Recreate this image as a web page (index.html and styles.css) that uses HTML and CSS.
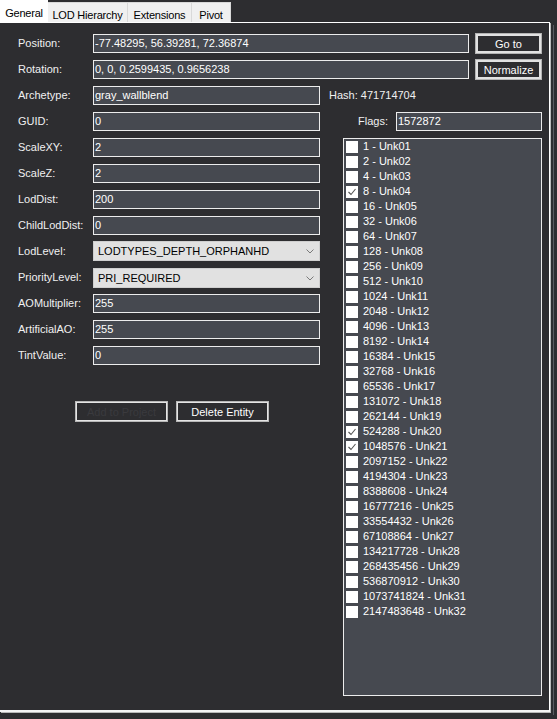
FILE: index.html
```html
<!DOCTYPE html>
<html lang="en">

<head>
    <meta charset="UTF-8">
    <title>Entity</title>
    <link rel="stylesheet" href="styles.css">
</head>

<body>
    <div class="tabs">
        <div class="tab active">General</div>
        <div class="tab tab-lod">LOD Hierarchy</div>
        <div class="tab tab-ext">Extensions</div>
        <div class="tab tab-pivot">Pivot</div>
    </div>

    <div class="page">
        <div class="row">
            <span class="label">Position:</span>
            <div class="field wide">-77.48295, 56.39281, 72.36874</div>
            <button class="btn btn-top">Go to</button>
        </div>
        <div class="row">
            <span class="label">Rotation:</span>
            <div class="field wide">0, 0, 0.2599435, 0.9656238</div>
            <button class="btn btn-top">Normalize</button>
        </div>

        <div class="split">
            <div class="left">
                <div class="row">
                    <span class="label">Archetype:</span>
                    <div class="field">gray_wallblend</div>
                </div>
                <div class="row">
                    <span class="label">GUID:</span>
                    <div class="field">0</div>
                </div>
                <div class="row">
                    <span class="label">ScaleXY:</span>
                    <div class="field">2</div>
                </div>
                <div class="row">
                    <span class="label">ScaleZ:</span>
                    <div class="field">2</div>
                </div>
                <div class="row">
                    <span class="label">LodDist:</span>
                    <div class="field">200</div>
                </div>
                <div class="row">
                    <span class="label">ChildLodDist:</span>
                    <div class="field">0</div>
                </div>
                <div class="row">
                    <span class="label">LodLevel:</span>
                    <div class="combo combo-up">
                        <span>LODTYPES_DEPTH_ORPHANHD</span>
                        <svg width="8" height="5" viewBox="0 0 8 5"><polyline points="0.5,0.5 4,4 7.5,0.5" fill="none" stroke="#7a7a7a" stroke-width="1"/></svg>
                    </div>
                </div>
                <div class="row">
                    <span class="label">PriorityLevel:</span>
                    <div class="combo">
                        <span>PRI_REQUIRED</span>
                        <svg width="8" height="5" viewBox="0 0 8 5"><polyline points="0.5,0.5 4,4 7.5,0.5" fill="none" stroke="#7a7a7a" stroke-width="1"/></svg>
                    </div>
                </div>
                <div class="row">
                    <span class="label">AOMultiplier:</span>
                    <div class="field">255</div>
                </div>
                <div class="row">
                    <span class="label">ArtificialAO:</span>
                    <div class="field">255</div>
                </div>
                <div class="row">
                    <span class="label">TintValue:</span>
                    <div class="field">0</div>
                </div>

                <div class="actions">
                    <button class="btn btn-low disabled">Add to Project</button>
                    <button class="btn btn-low">Delete Entity</button>
                </div>
            </div>

            <div class="right">
                <div class="row">
                    <span class="hash">Hash: 471714704</span>
                </div>
                <div class="row">
                    <span class="flags-label">Flags:</span>
                    <div class="field flags">1572872</div>
                </div>
                <div class="checklist">
                    <div class="item"><span class="box"></span>1 - Unk01</div>
                    <div class="item"><span class="box"></span>2 - Unk02</div>
                    <div class="item"><span class="box"></span>4 - Unk03</div>
                    <div class="item"><span class="box"><svg width="12" height="12" viewBox="0 0 12 12"><polyline points="2.5,6 5,8.5 9.5,3" fill="none" stroke="#555" stroke-width="1.1"/></svg></span>8 - Unk04</div>
                    <div class="item"><span class="box"></span>16 - Unk05</div>
                    <div class="item"><span class="box"></span>32 - Unk06</div>
                    <div class="item"><span class="box"></span>64 - Unk07</div>
                    <div class="item"><span class="box"></span>128 - Unk08</div>
                    <div class="item"><span class="box"></span>256 - Unk09</div>
                    <div class="item"><span class="box"></span>512 - Unk10</div>
                    <div class="item"><span class="box"></span>1024 - Unk11</div>
                    <div class="item"><span class="box"></span>2048 - Unk12</div>
                    <div class="item"><span class="box"></span>4096 - Unk13</div>
                    <div class="item"><span class="box"></span>8192 - Unk14</div>
                    <div class="item"><span class="box"></span>16384 - Unk15</div>
                    <div class="item"><span class="box"></span>32768 - Unk16</div>
                    <div class="item"><span class="box"></span>65536 - Unk17</div>
                    <div class="item"><span class="box"></span>131072 - Unk18</div>
                    <div class="item"><span class="box"></span>262144 - Unk19</div>
                    <div class="item"><span class="box"><svg width="12" height="12" viewBox="0 0 12 12"><polyline points="2.5,6 5,8.5 9.5,3" fill="none" stroke="#555" stroke-width="1.1"/></svg></span>524288 - Unk20</div>
                    <div class="item"><span class="box"><svg width="12" height="12" viewBox="0 0 12 12"><polyline points="2.5,6 5,8.5 9.5,3" fill="none" stroke="#555" stroke-width="1.1"/></svg></span>1048576 - Unk21</div>
                    <div class="item"><span class="box"></span>2097152 - Unk22</div>
                    <div class="item"><span class="box"></span>4194304 - Unk23</div>
                    <div class="item"><span class="box"></span>8388608 - Unk24</div>
                    <div class="item"><span class="box"></span>16777216 - Unk25</div>
                    <div class="item"><span class="box"></span>33554432 - Unk26</div>
                    <div class="item"><span class="box"></span>67108864 - Unk27</div>
                    <div class="item"><span class="box"></span>134217728 - Unk28</div>
                    <div class="item"><span class="box"></span>268435456 - Unk29</div>
                    <div class="item"><span class="box"></span>536870912 - Unk30</div>
                    <div class="item"><span class="box"></span>1073741824 - Unk31</div>
                    <div class="item"><span class="box"></span>2147483648 - Unk32</div>
                </div>
            </div>
        </div>
    </div>
</body>

</html>
```

FILE: styles.css
```css
* {
    margin: 0;
    padding: 0;
    box-sizing: border-box;
}

body {
    width: 557px;
    height: 719px;
    overflow: hidden;
    background-color: #2d2d30;
    color: #f0f0f0;
    font-family: "Liberation Sans", Arial, sans-serif;
    font-size: 11px;
}

.tabs {
    display: flex;
    align-items: flex-end;
    height: 22px;
}

.tab {
    display: flex;
    align-items: flex-end;
    justify-content: center;
    height: 20px;
    line-height: 13px;
    background-color: #f0f0f0;
    color: #000;
    border-right: 1px solid #d9d9d9;
    border-top: 1px solid #d9d9d9;
    letter-spacing: -0.2px;
}

.tab.active {
    width: 48px;
    height: 22px;
    padding-bottom: 2px;
    background-color: #fff;
    border: none;
}

.tab-lod {
    width: 80px;
}

.tab-ext {
    width: 64px;
}

.tab-pivot {
    width: 39px;
}

.page {
    width: 550px;
    height: 690px;
    padding: 11px 0 0 18px;
    border-top: 1px solid #fff;
    border-right: 1px solid #fff;
    border-bottom: 2px solid #f4f4f4;
    box-shadow: 1px 1px 0 #b8b8b8, 3px 3px 0 #2d2d30, 4px 3px 0 #5a5a60;
}

.row {
    display: flex;
    align-items: flex-start;
    height: 26px;
}

.label {
    width: 75px;
    line-height: 19px;
}

.field {
    width: 227px;
    height: 19px;
    padding-left: 1px;
    line-height: 17px;
    background-color: #464950;
    border: 1px solid #ececec;
    color: #fff;
    white-space: nowrap;
}

.field.wide {
    width: 376px;
}

.btn {
    background-color: #2d2d30;
    color: #fff;
    font-family: "Liberation Sans", Arial, sans-serif;
    font-size: 11px;
    cursor: pointer;
}

.btn-top {
    width: 67px;
    height: 21px;
    margin-top: -1px;
    margin-left: 6px;
    border: 1px solid #b4b4b4;
    box-shadow: inset 0 0 0 2px #e2e2e2;
}

.split {
    display: flex;
}

.left {
    width: 311px;
}

.combo {
    display: flex;
    align-items: center;
    justify-content: space-between;
    width: 227px;
    height: 20px;
    padding: 0 5px 0 4px;
    background-color: #e1e1e1;
    border: 1px solid #cfcfcf;
    color: #000;
}

.combo-up {
    margin-top: -1px;
}

.actions {
    display: flex;
    gap: 8px;
    margin-top: 29px;
    padding-left: 57px;
}

.btn-low {
    width: 93px;
    height: 21px;
    border: 1px solid #b8b8b8;
    box-shadow: inset 0 0 0 1px #e4e4e4;
}

.btn-low.disabled {
    color: #3a3a3e;
    cursor: default;
}

.right {
    width: 213px;
}

.hash {
    line-height: 19px;
}

.flags-label {
    padding-left: 29px;
    line-height: 19px;
}

.field.flags {
    width: 146px;
    margin-left: auto;
}

.checklist {
    width: 199px;
    height: 558px;
    margin-left: 14px;
    padding: 0 0 0 2px;
    background-color: #464950;
    border: 1px solid #ececec;
    color: #fff;
}

.item {
    display: flex;
    align-items: center;
    height: 15px;
    line-height: 13px;
    white-space: nowrap;
}

.box {
    display: block;
    width: 12px;
    height: 12px;
    margin-right: 5px;
    background-color: #fff;
}

.box svg {
    display: block;
}
```
